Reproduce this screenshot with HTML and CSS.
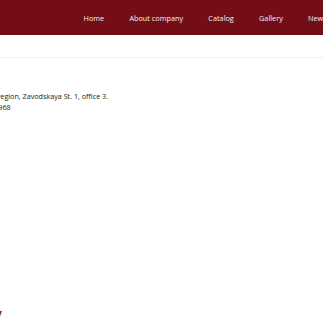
FILE: index.html
```html
<!DOCTYPE html>
<html lang="en">
<head>
  <meta charset="UTF-8" />
  <meta name="viewport" content="width=device-width, initial-scale=1.0" />
  <title>Contacts</title>
  <link rel="stylesheet" href="styles.css">
</head>
<body>
  <header class="topbar">
    <nav class="menu">
      <a href="#">Home</a>
      <a href="#">About company</a>
      <a href="#">Catalog</a>
      <a href="#">Gallery</a>
      <a href="#">News</a>
      <a href="#">Contacts</a>
    </nav>
  </header>
  <div class="subbar"></div>

  <section class="contacts">
    <p>Moscow region, Zavodskaya St. 1, office 3.</p>
    <p class="phone">+7 (495) 120-4968</p>
  </section>

  <div class="footer-title">Company</div>
</body>
</html>
```

FILE: styles.css
```css
body { margin: 0; font-family: "Open Sans", sans-serif; background: white; overflow: hidden; width: 323px; height: 323px; }
.topbar { background: #730e17; height: 35px; display: flex; align-items: center; }
.menu { display: flex; margin-left: 71px; white-space: nowrap; }
.menu a { color: #f7f0f0; text-decoration: none; font-size: 7.3px; padding: 0 12.6px; }
.subbar { height: 22px; border-bottom: 1px solid #f0f0f0; }
.contacts { margin-top: 33px; margin-left: -32px; font-size: 7.2px; color: #222; line-height: 11px; white-space: nowrap; }
.contacts p { margin: 0; }
.contacts .phone { margin-left: -17px; color: #222; }
.footer-title { margin-top: 192px; margin-left: -54.5px; color: #8a1a25; font-size: 12px; font-weight: bold; }
```
